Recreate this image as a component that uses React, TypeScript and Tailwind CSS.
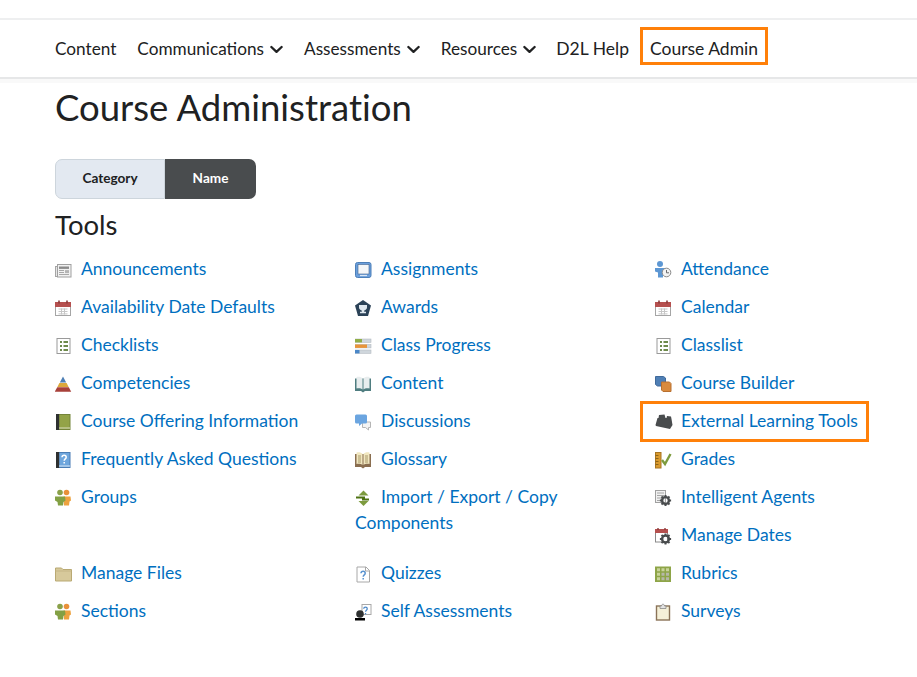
import { ReactNode } from 'react';

const Svg = ({ children }: { children: ReactNode }) => (
  <svg viewBox="1 0.5 18 18" width={18} height={18} className="inline-block align-[-4px] mr-2">
    {children}
  </svg>
);

const Gear = ({ x, y }: { x: number; y: number }) => (
  <g transform={`translate(${x} ${y})`}>
    <circle r="3.4" fill="none" stroke="#494c4e" strokeWidth="2.4" />
    <path d="M0-5.6V-3.600M0 3.600V5.600M-5.600 0H-3.600M3.600 0H5.600M-4-4L-2.600-2.600M2.600 2.600L4 4M4-4L2.600-2.600M-2.600 2.600L-4 4" stroke="#494c4e" strokeWidth="2" />
  </g>
);

const People = () => (
  <>
    <circle cx="12.500" cy="4" r="2.800" fill="#e8913a" />
    <path d="M9.500 8h7l.5 4-1.500 1-.5 4h-5z" fill="#eda23f" />
    <circle cx="6" cy="4" r="2.800" fill="#8aa14a" />
    <path d="M1 8h10l.5 4-2 1.500-.5 3.500H4l-.5-3.500-2.500-1.500z" fill="#83a044" />
  </>
);

const Checklist = () => (
  <>
    <rect x="2.500" y="2" width="13" height="15" fill="#fff" stroke="#9a9a9a" transform="translate(.5 0)" />
    <path d="M6 5.500h2M9.500 5.500h4.500M6 9.500h2M9.500 9.500h4.500M6 13.500h2M9.500 13.500h4.500" stroke="#3f6410" strokeWidth="1.600" />
  </>
);

const QMark = ({ color }: { color: string }) => (
  <path d="M7.500 7.200c.2-2.600 4.200-2.500 4.200 0 0 1.700-2 1.600-2 3.500M9.700 12v1.600" fill="none" stroke={color} strokeWidth="1.500" />
);

const icons: Record<string, ReactNode> = {
  announcements: (
    <>
      <rect x="1.500" y="6" width="3" height="10" fill="#e6e6e6" stroke="#a5a5a5" />
      <rect x="3.500" y="4" width="13.500" height="12.500" fill="#f1f1f1" stroke="#a0a0a0" />
      <rect x="5" y="6" width="10" height="2.400" fill="#8b8b8b" />
      <path d="M5 10h5M5 12h5M5 14h10" stroke="#a8a8a8" />
      <rect x="11" y="9.600" width="4" height="3" fill="#b4b4b4" />
    </>
  ),
  calendar: (
    <>
      <rect x="1.500" y="4" width="15" height="13" fill="#fff" stroke="#a5a5a5" />
      <rect x="1" y="3.500" width="16" height="5" fill="#b5504f" />
      <path d="M5 2v3M13 2v3" stroke="#8a3a3a" strokeWidth="1.600" />
      <path d="M4.500 10.500h9M4.500 13h9M4.500 15.400h9M7.500 10v6M10.500 10v6" stroke="#c6c6c6" fill="none" />
    </>
  ),
  checklist: <Checklist />,
  pyramid: (
    <>
      <path d="M9 2l3.200 6H5.800z" fill="#4e7fb5" />
      <path d="M5.400 8.400h7.200l2 4H3.400z" fill="#dca83c" />
      <path d="M3.200 12.800h11.600l2.400 4.400H.8z" fill="#a8403a" />
    </>
  ),
  bookGreen: (
    <>
      <rect x="4" y="2" width="12" height="15" fill="#93a347" stroke="#75853a" />
      <rect x="2" y="1.500" width="3.200" height="16" fill="#2e3030" />
      <path d="M5 15.500h11" stroke="#d8dcc0" />
    </>
  ),
  bookBlue: (
    <>
      <rect x="4" y="2" width="12" height="15" fill="#6ea6dd" stroke="#4a7db5" />
      <rect x="2" y="1.500" width="3.200" height="16" fill="#2e3030" />
      <path d="M5 15.500h11" stroke="#d6e6f5" />
      <g transform="translate(.5 -.5)">
        <QMark color="#fff" />
      </g>
    </>
  ),
  groups: <People />,
  folder: (
    <>
      <path d="M1.500 4.500V3.500h6l1.500 1.500h8.500v11.500H1.500z" fill="#d7c99b" stroke="#b9a973" />
      <path d="M1.500 6.500h16" stroke="#c5b585" />
    </>
  ),
  assignments: (
    <>
      <rect x="1.500" y="2" width="15.500" height="15" rx="2" fill="#6b9fdc" stroke="#4d7fb8" />
      <rect x="4" y="4" width="11" height="9.500" fill="#f4f6f8" stroke="#41638c" strokeWidth=".6" />
      <path d="M6 15h7" stroke="#dbe7f5" strokeWidth="1.200" />
    </>
  ),
  awards: (
    <>
      <path d="M9 1.500l8 5.600-3 10.400H4L1 7.100z" fill="#2b4257" />
      <path d="M5 6.500h8v2.400c0 1.800-1.800 2.800-2.800 3v1.300h1.800v1.600H6v-1.600h1.800v-1.300c-1-.2-2.800-1.200-2.800-3z" fill="#dfe8ef" />
    </>
  ),
  progress: (
    <>
      <rect x="1" y="2.500" width="16" height="3.400" fill="#cfd6dc" stroke="#b5bcc2" strokeWidth=".6" />
      <rect x="1" y="2.500" width="7" height="3.400" fill="#90ae48" />
      <rect x="1" y="8" width="16" height="3.400" fill="#cfd6dc" stroke="#b5bcc2" strokeWidth=".6" />
      <rect x="1" y="8" width="12" height="3.400" fill="#e8943a" />
      <rect x="1" y="13.500" width="16" height="3.400" fill="#cfd6dc" stroke="#b5bcc2" strokeWidth=".6" />
      <rect x="1" y="13.500" width="4.500" height="3.400" fill="#4a87c8" />
    </>
  ),
  contentBook: (
    <>
      <path d="M1 4h16v12.500h-6L9 18l-2-1.500H1z" fill="#4f7d80" />
      <path d="M2.500 2.500c2.500-.6 5 0 6 1.500v11c-1-1-3.500-1.500-6-1z" fill="#e8edee" />
      <path d="M15.500 2.500c-2.500-.6-5 0-6 1.500v11c1-1 3.500-1.500 6-1z" fill="#e8edee" />
    </>
  ),
  discussions: (
    <>
      <path d="M8.500 9.500h8v5.500h-2v2.500l-3-2.500h-3z" fill="#f4f4f4" stroke="#b5b5b5" />
      <path d="M2.500 2h9A1.500 1.500 0 0 1 13 3.500v6A1.500 1.500 0 0 1 11.500 11H8l-3 2.500V11H2.500A1.500 1.500 0 0 1 1 9.500v-6A1.500 1.500 0 0 1 2.500 2z" fill="#6ba5e0" />
    </>
  ),
  glossary: (
    <>
      <path d="M1 3.500h16v13h-6L9 18l-2-1.500H1z" fill="#8a6e50" />
      <path d="M2.500 2c2.500-.6 5 0 6 1.500v11c-1-1-3.500-1.500-6-1z" fill="#f1e7c0" />
      <path d="M15.500 2c-2.500-.6-5 0-6 1.500v11c1-1 3.500-1.500 6-1z" fill="#f1e7c0" />
      <path d="M4 5.500h3M4 7.500h3M4 9.500h3M4 11.500h3M11 5.500h3M11 7.500h3M11 9.500h3M11 11.500h3" stroke="#a89868" />
    </>
  ),
  importExport: (
    <>
      <path d="M9.500 2l5 5H4.500z" fill="#7d9b3e" />
      <path d="M9.500 17.500l5-5H4.500z" fill="#7d9b3e" />
      <path d="M2 9h9M8 11h7" stroke="#4e7312" strokeWidth="1.800" />
    </>
  ),
  quizzes: (
    <>
      <path d="M3 2.500h9l3.500 3.500v11.500H3z" fill="#fff" stroke="#a8a8a8" />
      <path d="M11.500 2.500v4h4" fill="none" stroke="#a8a8a8" />
      <g transform="translate(-.5 1.500)">
        <QMark color="#5a93d0" />
      </g>
    </>
  ),
  selfAssess: (
    <>
      <rect x="8" y="2" width="9" height="10" fill="#fff" stroke="#a8a8a8" />
      <g transform="translate(3.300 .2) scale(.85)">
        <QMark color="#4a87c8" />
      </g>
      <circle cx="6" cy="11.500" r="3.800" fill="#2e3030" />
      <path d="M1 15.500h10v2.500H1z" fill="#000" />
    </>
  ),
  attendance: (
    <>
      <circle cx="6" cy="3.500" r="3" fill="#5d97d3" />
      <path d="M1 7.500h10v3.500l-2 1v5H4v-5l-3-1z" fill="#5d97d3" />
      <circle cx="12.500" cy="12" r="4.300" fill="#f3f3f3" stroke="#8a8a8a" />
      <path d="M12.500 9.500v2.800h2.500" fill="none" stroke="#6a6a6a" />
    </>
  ),
  builder: (
    <>
      <path d="M1.500 2h8l2 1.500v8h-8l-2-1.500z" fill="#4f7fb5" stroke="#406a9b" />
      <path d="M7.500 7.500h8l1.500 1.500v8H9l-1.500-1.500z" fill="#d98a3d" stroke="#b87030" />
    </>
  ),
  lego: (
    <path d="M1.500 12.500L3.500 5.500L4.500 5.500L5 2.500L10.500 2L11.500 5.500L12.500 5.500L13 3.500L17 4L17.500 6.500L18.500 12.500L16 16.500L2 13.500z" fill="#494c4e" />
  ),
  grades: (
    <>
      <rect x="1.500" y="2" width="5.500" height="15.500" fill="#d99a2e" stroke="#a87520" />
      <path d="M1.500 5h3M1.500 8h3M1.500 11h3M1.500 14h3" stroke="#8c6418" />
      <path d="M8 9.500l3 4 5.500-10" fill="none" stroke="#7d9b3e" strokeWidth="2.400" />
    </>
  ),
  agents: (
    <>
      <rect x="1.500" y="2" width="10" height="12" fill="#f1f1f1" stroke="#a0a0a0" />
      <path d="M3 4.500h7M3 7h7M3 9.500h5M3 12h4" stroke="#a5a5a5" />
      <Gear x={11.500} y={12} />
    </>
  ),
  manageDates: (
    <>
      <rect x="1.500" y="3.500" width="12" height="12" fill="#fff" stroke="#8a8a8a" />
      <rect x="1" y="2.500" width="13" height="4" fill="#b5504f" />
      <path d="M4 1.500v2M11 1.500v2" stroke="#8a3a3a" strokeWidth="1.400" />
      <Gear x={11.500} y={12.500} />
    </>
  ),
  rubrics: (
    <>
      <rect x="1" y="2" width="16" height="15.500" fill="#8ea548" />
      <path d="M3 3.800h3v3H3zM7.500 3.800h3v3h-3zM12 3.800h3v3h-3zM3 8.300h3v3H3zM3 12.800h3v3H3z" fill="#c9d49a" />
      <path d="M7.500 8.300h3v3h-3zM12 8.300h3v3h-3zM7.500 12.800h3v3h-3zM12 12.800h3v3h-3z" fill="#b6b8a8" />
    </>
  ),
  surveys: (
    <>
      <rect x="2.500" y="3.500" width="13" height="14" fill="#f5f0d8" stroke="#8a7358" strokeWidth="1.400" />
      <path d="M6 3.500h1.500c0-2.400 3-2.400 3 0H12v2.500H6z" fill="#e3e3e3" stroke="#8a8a8a" strokeWidth=".8" />
    </>
  ),
};

const tools = [
  { label: 'Announcements', icon: 'announcements' },
  { label: 'Assignments', icon: 'assignments' },
  { label: 'Attendance', icon: 'attendance' },
  { label: 'Availability Date Defaults', icon: 'calendar' },
  { label: 'Awards', icon: 'awards' },
  { label: 'Calendar', icon: 'calendar' },
  { label: 'Checklists', icon: 'checklist' },
  { label: 'Class Progress', icon: 'progress' },
  { label: 'Classlist', icon: 'checklist' },
  { label: 'Competencies', icon: 'pyramid' },
  { label: 'Content', icon: 'contentBook' },
  { label: 'Course Builder', icon: 'builder' },
  { label: 'Course Offering Information', icon: 'bookGreen' },
  { label: 'Discussions', icon: 'discussions' },
  { label: 'External Learning Tools', icon: 'lego', marked: true },
  { label: 'Frequently Asked Questions', icon: 'bookBlue' },
  { label: 'Glossary', icon: 'glossary' },
  { label: 'Grades', icon: 'grades' },
  { label: 'Groups', icon: 'groups', tall: true },
  { label: 'Import / Export / Copy Components', icon: 'importExport', tall: true },
  { label: 'Intelligent Agents', icon: 'agents' },
  { label: 'Manage Dates', icon: 'manageDates' },
  { label: 'Manage Files', icon: 'folder' },
  { label: 'Quizzes', icon: 'quizzes' },
  { label: 'Rubrics', icon: 'rubrics' },
  { label: 'Sections', icon: 'groups' },
  { label: 'Self Assessments', icon: 'selfAssess' },
  { label: 'Surveys', icon: 'surveys' },
];

const Chevron = () => (
  <svg viewBox="0 0 14 9" width={13} height={9} className="ml-[6px] mt-[3px]">
    <path d="M1.500 1.800L7 7l5.500-5.200" fill="none" stroke="#202122" strokeWidth="2.500" strokeLinecap="round" strokeLinejoin="round" />
  </svg>
);

const NavItem = ({ label, menu, className }: { label: string; menu?: boolean; className?: string }) => (
  <a className={`flex items-center px-[10px] ${className ?? ''}`}>
    {label}
    {menu && <Chevron />}
  </a>
);

const App = () => {
  return (
    <div className="w-[917px] h-[677px] overflow-hidden bg-white text-[#202122] font-['Lato','Noto_Sans',sans-serif]">
      <div className="h-[20px] border-b-2 border-[#eeeff0]" />
      <nav className="h-[59px] border-b-2 border-[#e6e7e8] pl-[45px] flex items-center gap-px text-[17.2px]">
        <NavItem label="Content" />
        <NavItem label="Communications" menu />
        <NavItem label="Assessments" menu />
        <NavItem label="Resources" menu />
        <NavItem label="D2L Help" className="text-[17.5px] -ml-px translate-y-px" />
        <div className="relative flex items-center text-[17.5px]">
          <NavItem label="Course Admin" className="translate-y-px" />
          <span className="absolute left-0 right-0 top-[-8px] bottom-[-3px] border-[3px] border-[#ff8009]" />
        </div>
      </nav>
      <div className="h-[4px] bg-[#f9f9f9]" />
      <main className="pl-[55px]">
        <h1 className="text-[36.5px] leading-[50px] -mt-px font-normal [font-variant-ligatures:none]">Course Administration</h1>
        <div className="flex mt-[27px] w-[201px] h-[40px] text-[13.6px] font-bold">
          <div className="w-[110px] pb-px flex items-center justify-center bg-[#e3e9f1] border border-[#cdd5dc] rounded-l-[7px]">Category</div>
          <div className="w-[91px] pb-px flex items-center justify-center bg-[#494c4e] text-white rounded-r-[7px]">Name</div>
        </div>
        <h2 className="text-[27.5px] leading-[34px] mt-[9px] font-normal">Tools</h2>
        <ul className="grid grid-cols-[300px_300px_262px] auto-rows-[38px] mt-[14px] text-[17.5px] leading-[26px] text-[#006fbf]">
          {tools.map((tool) => (
            <li key={tool.label} className={tool.tall ? 'row-span-2 pr-[20px]' : 'pr-[20px]'}>
              <span className={tool.marked ? 'relative inline-block whitespace-nowrap' : ''}>
                <Svg>{icons[tool.icon]}</Svg>
                <a>{tool.label}</a>
                {tool.marked && (
                  <span className="absolute left-[-15px] right-[-11px] top-[-7px] bottom-[-8px] border-[3px] border-[#ff8009]" />
                )}
              </span>
            </li>
          ))}
        </ul>
      </main>
    </div>
  );
};

export default App;
